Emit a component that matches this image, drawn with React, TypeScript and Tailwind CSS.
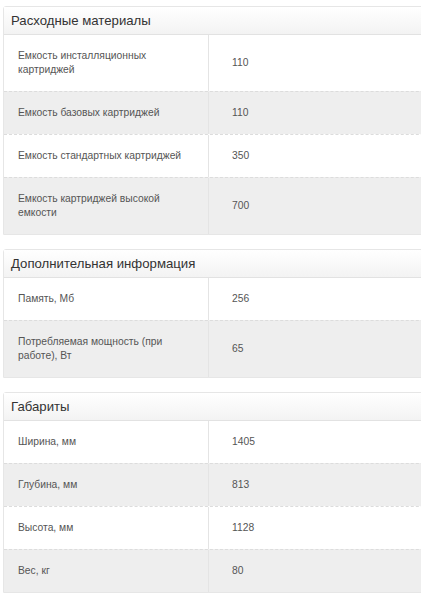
import React from "react";

type Row = [string, string];

const sections: { title: string; rows: Row[] }[] = [
  {
    title: "Расходные материалы",
    rows: [
      ["Емкость инсталляционных картриджей", "110"],
      ["Емкость базовых картриджей", "110"],
      ["Емкость стандартных картриджей", "350"],
      ["Емкость картриджей высокой емкости", "700"],
    ],
  },
  {
    title: "Дополнительная информация",
    rows: [
      ["Память, Мб", "256"],
      ["Потребляемая мощность (при работе), Вт", "65"],
    ],
  },
  {
    title: "Габариты",
    rows: [
      ["Ширина, мм", "1405"],
      ["Глубина, мм", "813"],
      ["Высота, мм", "1128"],
      ["Вес, кг", "80"],
    ],
  },
];

export default function App() {
  return (
    <div className="w-[421px] h-[600px] overflow-hidden bg-white font-['Liberation_Sans',Arial,sans-serif]">
      <div className="w-[460px] pl-[3px] pt-[6px] flex flex-col gap-[14px]">
        {sections.map((s) => (
          <div key={s.title} className="border border-[#e6e6e6] rounded-t-[3px]">
            <div className="h-[28px] flex items-center pl-[7px] text-[13.2px] text-[#333] bg-gradient-to-b from-white to-[#f3f3f3] border-b border-[#e2e2e2]">
              {s.title}
            </div>
            {s.rows.map(([k, v], i) => (
              <div
                key={k}
                className={`flex text-[10.3px] leading-[14px] text-[#555] ${
                  i % 2 === 1 ? "bg-[#eeeeee]" : "bg-white"
                } ${i > 0 ? "border-t border-dashed border-[#dcdcdc]" : ""}`}
              >
                <div className="w-[205px] shrink-0 border-r border-[#e4e4e4] pl-[14px] pr-[18px] flex items-center py-[14px]">
                  <span>{k}</span>
                </div>
                <div className="flex items-center pl-[23px]">{v}</div>
              </div>
            ))}
          </div>
        ))}
      </div>
    </div>
  );
}
